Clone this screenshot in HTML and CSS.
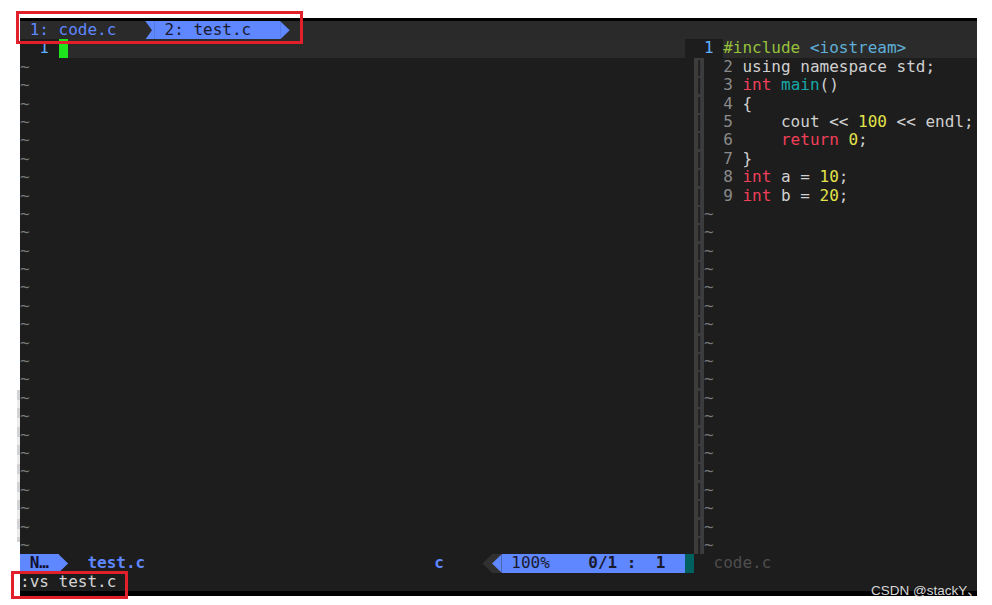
FILE: index.html
```html
<!DOCTYPE html>
<html lang="en">
    <head>
        <meta charset="UTF-8" />
        <meta name="viewport" content="width=device-width, initial-scale=1.0" />
        <link rel="stylesheet" href="styles.css">
        <title>vim :vs test.c</title>
    </head>
    <body>
        <div class="page">
            <div class="term">
                <!-- tabline -->
                <div class="row tabline"><span class="tab"> 1: code.c   </span><span class="cell notch"></span><span class="tab-sel"> 2: test.c   </span><span class="cell tri-r blue"></span></div>

                <!-- first screen line: both windows, drawn a bit off -->
                <div class="row"><span class="nr-cur">  1 </span><span class="cursor"> </span><span class="cl cl-left"></span><span class="gap"></span><span class="nr-cur">1 </span><span class="cl cl-right"><span class="pre">#include</span> <span class="inc">&lt;iostream&gt;</span></span></div>

                <div class="split">
                    <div class="pane pane-left">
                        <div class="line tilde">~</div>
                        <div class="line tilde">~</div>
                        <div class="line tilde">~</div>
                        <div class="line tilde">~</div>
                        <div class="line tilde">~</div>
                        <div class="line tilde">~</div>
                        <div class="line tilde">~</div>
                        <div class="line tilde">~</div>
                        <div class="line tilde">~</div>
                        <div class="line tilde">~</div>
                        <div class="line tilde">~</div>
                        <div class="line tilde">~</div>
                        <div class="line tilde">~</div>
                        <div class="line tilde">~</div>
                        <div class="line tilde">~</div>
                        <div class="line tilde">~</div>
                        <div class="line tilde">~</div>
                        <div class="line tilde">~</div>
                        <div class="line tilde">~</div>
                        <div class="line tilde">~</div>
                        <div class="line tilde">~</div>
                        <div class="line tilde">~</div>
                        <div class="line tilde">~</div>
                        <div class="line tilde">~</div>
                        <div class="line tilde">~</div>
                        <div class="line tilde">~</div>
                        <div class="line tilde">~</div>
                    </div>

                    <div class="vsplit">
                        <div class="line">|</div>
                        <div class="line">|</div>
                        <div class="line">|</div>
                        <div class="line">|</div>
                        <div class="line">|</div>
                        <div class="line">|</div>
                        <div class="line">|</div>
                        <div class="line">|</div>
                        <div class="line">|</div>
                        <div class="line">|</div>
                        <div class="line">|</div>
                        <div class="line">|</div>
                        <div class="line">|</div>
                        <div class="line">|</div>
                        <div class="line">|</div>
                        <div class="line">|</div>
                        <div class="line">|</div>
                        <div class="line">|</div>
                        <div class="line">|</div>
                        <div class="line">|</div>
                        <div class="line">|</div>
                        <div class="line">|</div>
                        <div class="line">|</div>
                        <div class="line">|</div>
                        <div class="line">|</div>
                        <div class="line">|</div>
                        <div class="line">|</div>
                    </div>

                    <div class="pane pane-right">
                        <div class="line"><span class="nr">  2 </span>using namespace std;</div>
                        <div class="line"><span class="nr">  3 </span><span class="kw">int</span> <span class="fn">main</span>()</div>
                        <div class="line"><span class="nr">  4 </span>{</div>
                        <div class="line"><span class="nr">  5 </span>    cout &lt;&lt; <span class="num">100</span> &lt;&lt; endl;</div>
                        <div class="line"><span class="nr">  6 </span>    <span class="kw">return</span> <span class="num">0</span>;</div>
                        <div class="line"><span class="nr">  7 </span>}</div>
                        <div class="line"><span class="nr">  8 </span><span class="kw">int</span> a = <span class="num">10</span>;</div>
                        <div class="line"><span class="nr">  9 </span><span class="kw">int</span> b = <span class="num">20</span>;</div>
                        <div class="line tilde">~</div>
                        <div class="line tilde">~</div>
                        <div class="line tilde">~</div>
                        <div class="line tilde">~</div>
                        <div class="line tilde">~</div>
                        <div class="line tilde">~</div>
                        <div class="line tilde">~</div>
                        <div class="line tilde">~</div>
                        <div class="line tilde">~</div>
                        <div class="line tilde">~</div>
                        <div class="line tilde">~</div>
                        <div class="line tilde">~</div>
                        <div class="line tilde">~</div>
                        <div class="line tilde">~</div>
                        <div class="line tilde">~</div>
                        <div class="line tilde">~</div>
                        <div class="line tilde">~</div>
                        <div class="line tilde">~</div>
                        <div class="line tilde">~</div>
                    </div>
                </div>

                <!-- statusline -->
                <div class="row status"><span class="mode"> N… </span><span class="cell tri-r blue"></span><span>  </span><span class="st-file">test.c</span><span>                              </span><span class="st-file">c</span><span>    </span><span class="cell tri-l grey"></span><span class="cell grey-bg"><span class="cell tri-l blue"></span></span><span class="pos"> 100%    <b>0/1 :  1</b>  </span><span class="cell teal"></span><span class="st-off">  code.c</span></div>

                <!-- command line -->
                <div class="row cmd"><span>:vs test.c</span></div>
            </div>

            <div class="edge-strip"></div>
            <div class="mark mark-tabs"></div>
            <div class="mark mark-cmd"></div>
            <div class="watermark">CSDN @stackY、</div>
        </div>
    </body>
</html>
```

FILE: styles.css
```css
* {
    padding: 0;
    margin: 0;
    box-sizing: border-box;
}

body {
    background: #fff;
    font-family: "DejaVu Sans Mono", monospace;
    font-size: 16px;
}

.page {
    position: relative;
    width: 992px;
    height: 605px;
    padding: 18px 0 0 20px;
}

.term {
    width: 957px;
    background: #000;
    padding: 3px 0 5px;
    color: #d0d0d0;
}

.row {
    display: flex;
    height: 18.4px;
    line-height: 18.4px;
    white-space: pre;
    background: #1d1d1d;
}

.line {
    display: block;
    height: 18.4px;
    line-height: 18.4px;
    white-space: pre;
}

.cell {
    display: block;
    width: 1ch;
    height: 18.4px;
    flex-shrink: 0;
}

/* tabline */
.tabline {
    background: #2a2a2a;
}

.tab {
    color: #5f87ff;
}

.tab-sel {
    background: #5f87ff;
    color: #1a1a2e;
}

.notch {
    background: #5f87ff;
    clip-path: polygon(0 0, 100% 0, 100% 100%, 0 100%, 70% 50%);
}

.tri-r {
    clip-path: polygon(0 0, 100% 50%, 0 100%);
}

.tri-l {
    clip-path: polygon(100% 0, 0 50%, 100% 100%);
}

.blue {
    background: #5f87ff;
}

.grey {
    background: #303030;
}

.grey-bg {
    background: #303030;
}

.teal {
    background: #005f5f;
}

/* first line */
.nr-cur {
    color: #5fafff;
}

.cursor {
    width: 1ch;
    background: #1ee41e;
}

.cl {
    background: #2b2b2b;
}

.cl-left {
    width: 64ch;
}

.gap {
    width: 2ch;
}

.cl-right {
    flex: 1;
}

/* windows */
.split {
    display: flex;
    background: #1d1d1d;
}

.pane-left {
    width: 70ch;
}

.vsplit {
    width: 1ch;
    background: #3c3c3c;
    color: #171412;
}

.pane-right {
    flex: 1;
}

.tilde {
    color: #7a7a7a;
}

.nr {
    color: #8a8a8a;
}

.pre {
    color: #97c13a;
}

.inc {
    color: #5fafd7;
}

.kw {
    color: #f0405a;
}

.fn {
    color: #17a8a8;
}

.num {
    color: #e3e34a;
}

/* statusline */
.mode {
    background: #5f87ff;
    color: #101030;
    font-weight: bold;
}

.st-file {
    color: #5f87ff;
    font-weight: bold;
}

.pos {
    background: #5f87ff;
    color: #1a1a2e;
}

.st-off {
    color: #4e4e4e;
}

.cmd {
    color: #d4d4d4;
}

/* screenshot marks */
.edge-strip {
    position: absolute;
    left: 17px;
    top: 390px;
    width: 3px;
    height: 152px;
    background: repeating-linear-gradient(#d2d2d2 0 10px, #ececec 10px 18.4px);
}

.mark {
    position: absolute;
    border: 3px solid #e2202c;
}

.mark-tabs {
    left: 16px;
    top: 11px;
    width: 287px;
    height: 33px;
}

.mark-cmd {
    left: 11px;
    top: 571px;
    width: 117px;
    height: 28px;
}

.watermark {
    position: absolute;
    left: 871px;
    top: 579px;
    font-family: "Liberation Sans", "Noto Sans CJK SC", sans-serif;
    font-size: 13.5px;
    color: #d6d6d6;
}
```
